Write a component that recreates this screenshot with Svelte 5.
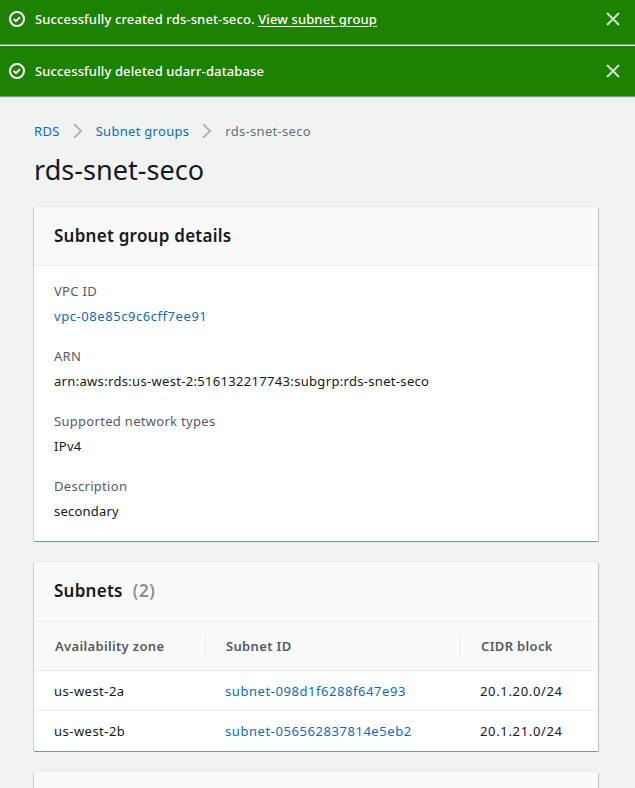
<script>
  const notices = [
    { text: 'Successfully created rds-snet-seco.', link: 'View subnet group' },
    { text: 'Successfully deleted udarr-database', link: '' }
  ];
  const details = [
    { label: 'VPC ID', value: 'vpc-08e85c9c6cff7ee91', kind: 'hash', link: true },
    { label: 'ARN', value: 'arn:aws:rds:us-west-2:516132217743:subgrp:rds-snet-seco', kind: 'arn' },
    { label: 'Supported network types', value: 'IPv4', kind: 'arn' },
    { label: 'Description', value: 'secondary', kind: 'plain' }
  ];
  const subnets = [
    { zone: 'us-west-2a', id: 'subnet-098d1f6288f647e93', cidr: '20.1.20.0/24' },
    { zone: 'us-west-2b', id: 'subnet-056562837814e5eb2', cidr: '20.1.21.0/24' }
  ];
</script>

{#snippet chevron()}
  <svg class="chevron" width="10" height="16" viewBox="0 0 10 16"><path d="M1.3 1.3 8 8l-6.7 6.7" /></svg>
{/snippet}

<div class="page">
  <div class="notices">
    {#each notices as n}
      <div class="notice">
        <svg class="check" width="16" height="16" viewBox="0 0 16 16"><circle cx="8" cy="8" r="7" /><path d="m4.6 7.9 2.4 2.3 3.9-3.9" /></svg>
        <p>{n.text}{#if n.link}{' '}<a href="#group">{n.link}</a>{/if}</p>
        <button aria-label="Dismiss"><svg width="14" height="14" viewBox="0 0 14 14"><path d="m1 1 12 12M13 1 1 13" /></svg></button>
      </div>
    {/each}
  </div>

  <main>
    <nav>
      <a href="#rds">RDS</a>{@render chevron()}<a href="#groups">Subnet groups</a>{@render chevron()}<span>rds-snet-seco</span>
    </nav>
    <h1>rds-snet-seco</h1>

    <section>
      <header><h2>Subnet group details</h2></header>
      <dl>
        {#each details as d}
          <div>
            <dt>{d.label}</dt>
            <dd class={d.kind}>{#if d.link}<a href="#vpc">{d.value}</a>{:else}{d.value}{/if}</dd>
          </div>
        {/each}
      </dl>
    </section>

    <section>
      <header class="table-title"><h2>Subnets</h2><span class="count">(2)</span></header>
      <div class="row head">
        <div>Availability zone</div>
        <div>Subnet ID</div>
        <div>CIDR block</div>
      </div>
      {#each subnets as s}
        <div class="row">
          <div class="zone">{s.zone}</div>
          <div class="hash"><a href="#subnet">{s.id}</a></div>
          <div class="cidr">{s.cidr}</div>
        </div>
      {/each}
    </section>

    <section><header></header></section>
  </main>
</div>

<style>
  .page {
    height: 788px;
    overflow: hidden;
    background: #f1f3f3;
    color: #16191f;
    font: 13px/20px "Noto Sans", "Open Sans", sans-serif;
    letter-spacing: 0.3px;
  }
  a { color: #0f6cb8; text-decoration: none; }
  p, h1, h2, dl, dd { margin: 0; }
  .notice {
    display: flex;
    align-items: center;
    box-sizing: border-box;
    height: 46px;
    padding: 0 15px 7px 9px;
    background: #1d8102;
    color: #fff;
    border-bottom: 1px solid #e6ebe4;
    box-shadow: inset 0 -1px #879596;
  }
  .notice + .notice { height: 51px; padding-bottom: 0; border-bottom: 1px solid #879596; box-shadow: 0 1px #dde0e0; }
  .notice p { flex: 1; margin-left: 10px; font-weight: 500; letter-spacing: 0.13px; white-space: nowrap; }
  .notice p a { color: #fff; text-decoration: underline; text-underline-offset: 2px; }
  .check, button svg, .chevron { display: block; flex: none; fill: none; stroke: #fff; stroke-width: 2; }
  button { padding: 0; border: 0; background: none; }
  button svg { stroke: #d2e6cd; }
  main { padding: 24px 37px 0 34px; }
  nav { display: flex; align-items: center; height: 20px; color: #687078; white-space: nowrap; }
  .chevron { margin: 0 13px; stroke: #aab7b8; }
  h1 { height: 36px; margin: 11px 0 19px; font-size: 27px; line-height: 36px; font-weight: 400; letter-spacing: 0.05px; white-space: nowrap; }
  section {
    margin-bottom: 21px;
    background: #fff;
    box-shadow: 0 1px #879596, 1px 1px 1px #c3caca, -1px 0 #cdd3d3, 0 -1px #e7eaea;
  }
  header { display: flex; align-items: center; height: 58px; padding: 0 20px; background: #fafafa; border-bottom: 1px solid #eaeded; }
  .table-title { height: 57px; padding-bottom: 2px; }
  h2, .count { font-size: 17px; line-height: 22px; font-weight: 600; letter-spacing: 0.25px; }
  .count { margin-left: 10px; color: #879096; letter-spacing: 0.7px; }
  dl { display: flex; flex-direction: column; gap: 15px; padding: 15px 20px 15px; }
  dl > div { height: 50px; }
  dt { height: 20px; margin-bottom: 5px; color: #545b64; }
  .hash { letter-spacing: 0.56px; }
  .arn { letter-spacing: 0.32px; }
  .plain { letter-spacing: 0.2px; }
  .zone { letter-spacing: 0.48px; }
  .cidr { letter-spacing: 0.66px; }
  .row { display: grid; grid-template-columns: 171px 255px 1fr; align-items: center; height: 39px; border-bottom: 1px solid #eaeded; }
  .row:last-child { height: 40px; border-bottom: 0; }
  .row > div { padding-left: 20px; }
  .head { height: 48px; background: #fafafa; color: #545b64; font-weight: 600; letter-spacing: 0.34px; }
  .head > div { height: 24px; line-height: 24px; border-left: 1px solid #eaeded; }
  .head > div:first-child { border-left-color: transparent; }
</style>
